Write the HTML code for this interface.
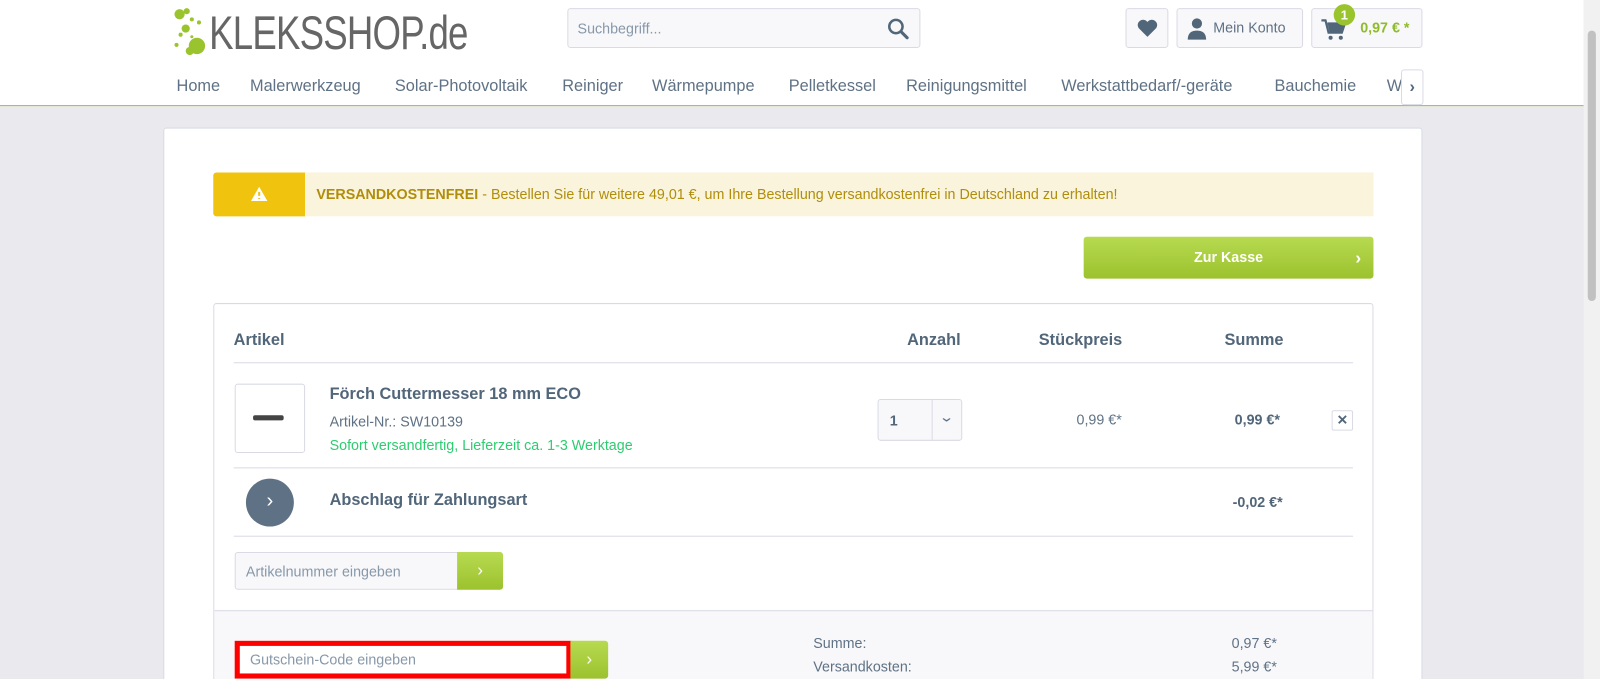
<!DOCTYPE html>
<html><head><meta charset="utf-8"><style>
*{box-sizing:border-box;margin:0;padding:0}
html,body{width:1600px;height:679px;overflow:hidden}
body{background:#e9e9ee;font-family:"Liberation Sans",sans-serif;color:#5f7285;position:relative}
#w{position:absolute;left:0;top:0;width:1568px;height:679px;transform:scale(1.0204);transform-origin:0 0}
.hdr{position:absolute;left:0;top:0;width:1552px;height:104px;background:#fff;border-bottom:1px solid #9ac42e}
.abs{position:absolute}
.btn{position:absolute;border:1px solid #dadae5;border-radius:3px;background:#f8f8fa}
.nav span{position:absolute;top:76px;font-size:16px;color:#5f7285}
.card{position:absolute;left:160px;top:125px;width:1234px;height:560px;background:#fff;border:1px solid #dadae5;border-radius:3px}
.b{font-weight:bold;color:#52667a}
.sb{position:absolute;left:1552px;top:0;width:16px;height:679px;background:#f1f1f1}
</style></head><body><div id="w">
<div class="hdr">
 <svg class="abs" style="left:168px;top:6px" width="40" height="52" viewBox="0 0 40 52"><g fill="#9ac42e"><circle cx="8" cy="8" r="5"/><circle cx="15" cy="5" r="3"/><circle cx="20" cy="13" r="2"/><circle cx="14" cy="22" r="4"/><circle cx="9" cy="28" r="2"/><circle cx="27" cy="16" r="2"/><circle cx="25" cy="39" r="8"/><circle cx="18" cy="44" r="4"/><circle cx="5" cy="38" r="2"/><circle cx="20" cy="30" r="1.5"/></g></svg>
 <div class="abs" style="left:205px;top:8px;font-size:46px;color:#666;letter-spacing:-1px;line-height:48px;transform:scaleX(.78);transform-origin:left">KLEKSSHOP.de</div>
 <div class="abs" style="left:556px;top:8px;width:346px;height:39px;border:1px solid #dadae5;border-radius:3px;background:#f8f8fa"><span class="abs" style="left:9px;top:11px;font-size:14px;color:#8798a9">Suchbegriff...</span>
 <svg class="abs" style="left:312px;top:8px" width="22" height="22" viewBox="0 0 22 22"><circle cx="9" cy="9" r="6.5" fill="none" stroke="#52667a" stroke-width="2.5"/><path d="M14 14l6 6" stroke="#52667a" stroke-width="3" stroke-linecap="round"/></svg></div>
 <div class="btn" style="left:1103px;top:8px;width:42px;height:39px"><svg class="abs" style="left:10px;top:10px" width="21" height="18" viewBox="0 0 24 21"><path d="M12 20L2 10A5.5 5.5 0 0112 3a5.5 5.5 0 0110 7z" fill="#52667a"/></svg></div>
 <div class="btn" style="left:1153px;top:8px;width:124px;height:39px"><svg class="abs" style="left:8px;top:8px" width="22" height="22" viewBox="0 0 22 22"><circle cx="11" cy="6" r="5" fill="#52667a"/><path d="M2 22c0-7 4-9 9-9s9 2 9 9z" fill="#52667a"/></svg><span class="abs" style="left:35px;top:10px;font-size:14px">Mein Konto</span></div>
 <div class="btn" style="left:1285px;top:8px;width:109px;height:39px"><svg class="abs" style="left:8px;top:9px" width="26" height="22" viewBox="0 0 26 22"><path d="M1 2h4l3 12h13l3-9H7" fill="none" stroke="#52667a" stroke-width="2.2"/><path d="M7 5h17l-3 9H9z" fill="#52667a"/><circle cx="10" cy="19" r="2" fill="#52667a"/><circle cx="20" cy="19" r="2" fill="#52667a"/></svg><span class="abs" style="left:47px;top:10px;font-size:14px;font-weight:bold;color:#8fbb2d">0,97 € *</span></div>
 <div class="abs" style="left:1307px;top:4px;width:21px;height:21px;border-radius:50%;background:#9ac42e;color:#fff;font-size:13px;font-weight:bold;text-align:center;line-height:21px">1</div>
 <div class="nav"><span style="left:173px">Home</span><span style="left:245px">Malerwerkzeug</span><span style="left:387px">Solar-Photovoltaik</span><span style="left:551px">Reiniger</span><span style="left:639px">Wärmepumpe</span><span style="left:773px">Pelletkessel</span><span style="left:888px">Reinigungsmittel</span><span style="left:1040px">Werkstattbedarf/-geräte</span><span style="left:1249px">Bauchemie</span><span style="left:1359px">W</span></div>
 <div class="abs" style="left:1373px;top:68px;width:22px;height:35px;background:#fff;border:1px solid #dadae5;border-radius:3px;text-align:center;line-height:33px;font-size:16px;font-weight:bold;color:#52667a">›</div>
</div>
<div class="card">
 <div class="abs" style="left:48px;top:43px;width:90px;height:43px;background:#f0c30f;border-radius:3px 0 0 3px"><svg class="abs" style="left:37px;top:14px" width="16" height="14" viewBox="0 0 16 14"><path d="M8 0l8 14H0z" fill="#fff"/><path d="M8 5v4M8 11v1" stroke="#f0c30f" stroke-width="2"/></svg></div>
 <div class="abs" style="left:138px;top:43px;width:1047px;height:43px;background:#faf4dc;font-size:14px;color:#b08d0a;padding:13px 11px;white-space:nowrap"><b>VERSANDKOSTENFREI</b> - Bestellen Sie für weitere 49,01 €, um Ihre Bestellung versandkostenfrei in Deutschland zu erhalten!</div>
 <div class="abs" style="left:901px;top:106px;width:284px;height:41px;border-radius:3px;background:linear-gradient(#b7da50,#9cc22e);color:#fff;font-weight:bold;font-size:14px;text-align:center;line-height:41px">Zur Kasse<span class="abs" style="right:12px;top:0;font-size:17px">›</span></div>
 <div class="abs" style="left:48px;top:171px;width:1137px;height:400px;border:1px solid #dadae5;border-radius:3px;overflow:hidden">
  <div class="abs b" style="left:19px;top:27px;font-size:16px">Artikel</div>
  <div class="abs b" style="left:679px;top:27px;font-size:16px">Anzahl</div>
  <div class="abs b" style="left:808px;top:27px;font-size:16px">Stückpreis</div>
  <div class="abs b" style="left:990px;top:27px;font-size:16px">Summe</div>
  <div class="abs" style="left:19px;top:57px;width:1097px;border-top:1px solid #dadae5"></div>
  <div class="abs" style="left:20px;top:78px;width:69px;height:68px;border:1px solid #dadae5;border-radius:3px"><div class="abs" style="left:17px;top:30px;width:30px;height:5px;background:#444;border-radius:2px"></div></div>
  <div class="abs b" style="left:113px;top:80px;font-size:16px">Förch Cuttermesser 18 mm ECO</div>
  <div class="abs" style="left:113px;top:107px;font-size:14px">Artikel-Nr.: SW10139</div>
  <div class="abs" style="left:113px;top:130px;font-size:14px;color:#2ecc71">Sofort versandfertig, Lieferzeit ca. 1-3 Werktage</div>
  <div class="abs" style="left:650px;top:93px;width:83px;height:41px;border:1px solid #dadae5;border-radius:3px;background:#f8f8fa"><span class="abs b" style="left:11px;top:12px;font-size:14px">1</span><div class="abs" style="left:52px;top:0;height:39px;border-left:1px solid #dadae5"></div><span class="abs" style="left:61px;top:9px;font-size:13px;transform:scaleX(1.4)">⌄</span></div>
  <div class="abs" style="left:845px;top:105px;font-size:14px">0,99 €*</div>
  <div class="abs b" style="left:1000px;top:105px;font-size:14px">0,99 €*</div>
  <div class="abs" style="left:1095px;top:104px;width:21px;height:20px;border:1px solid #dadae5;border-radius:2px;text-align:center;line-height:18px;font-size:13px;font-weight:bold;color:#52667a">✕</div>
  <div class="abs" style="left:19px;top:160px;width:1097px;border-top:1px solid #dadae5"></div>
  <div class="abs" style="left:31px;top:171px;width:47px;height:47px;border-radius:50%;background:#5f7285;color:#fff;text-align:center;line-height:45px;font-size:20px">›</div>
  <div class="abs b" style="left:113px;top:184px;font-size:16px">Abschlag für Zahlungsart</div>
  <div class="abs b" style="left:998px;top:186px;font-size:14px">-0,02 €*</div>
  <div class="abs" style="left:19px;top:227px;width:1097px;border-top:1px solid #dadae5"></div>
  <div class="abs" style="left:20px;top:243px;width:219px;height:37px;border:1px solid #dadae5;border-radius:3px 0 0 3px;background:#f8f8fa;font-size:14px;color:#8798a9;padding:10px 10px">Artikelnummer eingeben</div>
  <div class="abs" style="left:238px;top:243px;width:45px;height:37px;background:linear-gradient(#b7da50,#9cc22e);border-radius:0 3px 3px 0;color:#fff;text-align:center;line-height:36px;font-size:17px">›</div>
  <div class="abs" style="left:0;top:300px;width:1137px;height:100px;background:#f8f8fa;border-top:1px solid #dadae5"></div>
  <div class="abs" style="left:20px;top:330px;width:330px;height:37px;border:5px solid #f00;background:#fff;font-size:14px;color:#8798a9;padding:5px 10px">Gutschein-Code eingeben</div>
  <div class="abs" style="left:349px;top:330px;width:37px;height:37px;background:linear-gradient(#b7da50,#9cc22e);border-radius:0 3px 3px 0;color:#fff;text-align:center;line-height:36px;font-size:17px">›</div>
  <div class="abs" style="left:587px;top:324px;font-size:14px">Summe:</div>
  <div class="abs" style="left:997px;top:324px;font-size:14px">0,97 €*</div>
  <div class="abs" style="left:587px;top:347px;font-size:14px">Versandkosten:</div>
  <div class="abs" style="left:997px;top:347px;font-size:14px">5,99 €*</div>
 </div>
</div>
<div class="sb"><div class="abs" style="left:4px;top:30px;width:8px;height:265px;background:#c1c1c1;border-radius:4px"></div></div>
</div></body></html>
